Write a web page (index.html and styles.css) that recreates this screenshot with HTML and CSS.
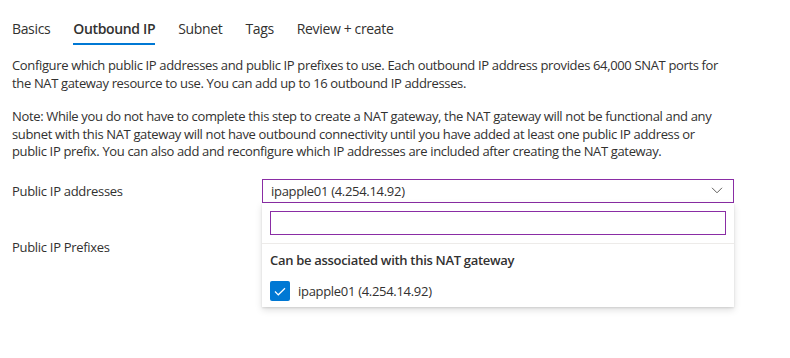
FILE: index.html
```html
<!DOCTYPE html>
<html>
<head>
<meta charset="UTF-8">
<title>Create NAT gateway - Outbound IP</title>
<link rel="stylesheet" href="styles.css">
</head>
<body>
<div class="page">
<div class="tabs">
<a class="tab">Basics</a>
<a class="tab active">Outbound IP</a>
<a class="tab">Subnet</a>
<a class="tab">Tags</a>
<a class="tab">Review + create</a>
</div>
<p class="info">Configure which public IP addresses and public IP prefixes to use. Each outbound IP address provides 64,000 SNAT ports for the NAT gateway resource to use. You can add up to 16 outbound IP addresses.</p>
<p class="info">Note: While you do not have to complete this step to create a NAT gateway, the NAT gateway will not be functional and any subnet with this NAT gateway will not have outbound connectivity until you have added at least one public IP address or<br>public IP prefix. You can also add and reconfigure which IP addresses are included after creating the NAT gateway.</p>
<div class="form">
<div class="row">
<label class="label">Public IP addresses</label>
<div class="field">
<div class="dropdown focused">
<span class="value">ipapple01 (4.254.14.92)</span>
<svg class="chevron" width="12" height="7" viewBox="0 0 12 7"><path d="M1 0.8 L6 5.8 L11 0.8" fill="none" stroke="#605e5c" stroke-width="1"/></svg>
</div>
<div class="menu">
<div class="menu-search">
<input type="text" class="search-box">
</div>
<div class="menu-group">
<div class="menu-header">Can be associated with this NAT gateway</div>
<div class="menu-item">
<span class="checkbox"><svg width="20" height="20" viewBox="0 0 20 20"><path d="M5 10.5 L8.3 13.8 L15 7.2" fill="none" stroke="#fff" stroke-width="1.2"/></svg></span>
<span>ipapple01 (4.254.14.92)</span>
</div>
</div>
</div>
</div>
</div>
<div class="row">
<label class="label">Public IP Prefixes</label>
<div class="field">
<div class="dropdown">
<span class="value"></span>
</div>
</div>
</div>
</div>
</div>
</body>
</html>
```

FILE: styles.css
```css
body{margin:0;background:#fff;color:#323130;
font-family:"Open Sans","Noto Sans",sans-serif;font-size:13px;}
.page{padding:0 12px;min-height:358px;box-sizing:border-box;}
.tabs{display:flex;gap:23px;padding-top:19px;}
.tab{font-size:14px;line-height:20px;padding-bottom:4px;
border-bottom:2px solid transparent;color:#323130;letter-spacing:-0.35px;}
.tab.active{font-weight:600;border-bottom-color:#0078d4;}
.info{margin:12px 0 0;line-height:17.5px;max-width:724px;letter-spacing:-0.35px;}
.info + .info{margin-top:16px;}
.form{margin-top:18px;}
.row{display:flex;align-items:center;margin-bottom:32px;}
.label{width:250px;flex:none;letter-spacing:-0.3px;}
.field{position:relative;width:472px;}
.dropdown{height:24px;box-sizing:border-box;border:1px solid #8a8886;
display:flex;align-items:center;justify-content:space-between;padding:0 10px 0 8px;}
.dropdown.focused{border-color:#8a2da5;}
.value{letter-spacing:-0.3px;}
.menu{position:absolute;top:100%;left:0;right:0;z-index:2;background:#fff;
box-shadow:0 3px 7px rgba(0,0,0,0.13),0 0.6px 1.8px rgba(0,0,0,0.11);}
.menu-search{padding:8px;border-bottom:1px solid #edebe9;}
.search-box{display:block;width:100%;height:24px;box-sizing:border-box;margin:0;
border:1px solid #8a2da5;outline:none;padding:0 8px;font:inherit;}
.menu-group{padding:6px 8px 6px;}
.menu-header{font-weight:600;line-height:20px;letter-spacing:-0.3px;}
.menu-item{display:flex;align-items:center;gap:8px;margin-top:11px;line-height:20px;letter-spacing:-0.3px;}
.checkbox{width:20px;height:20px;background:#0078d4;border-radius:2px;display:block;}
.checkbox svg{display:block;}
```
